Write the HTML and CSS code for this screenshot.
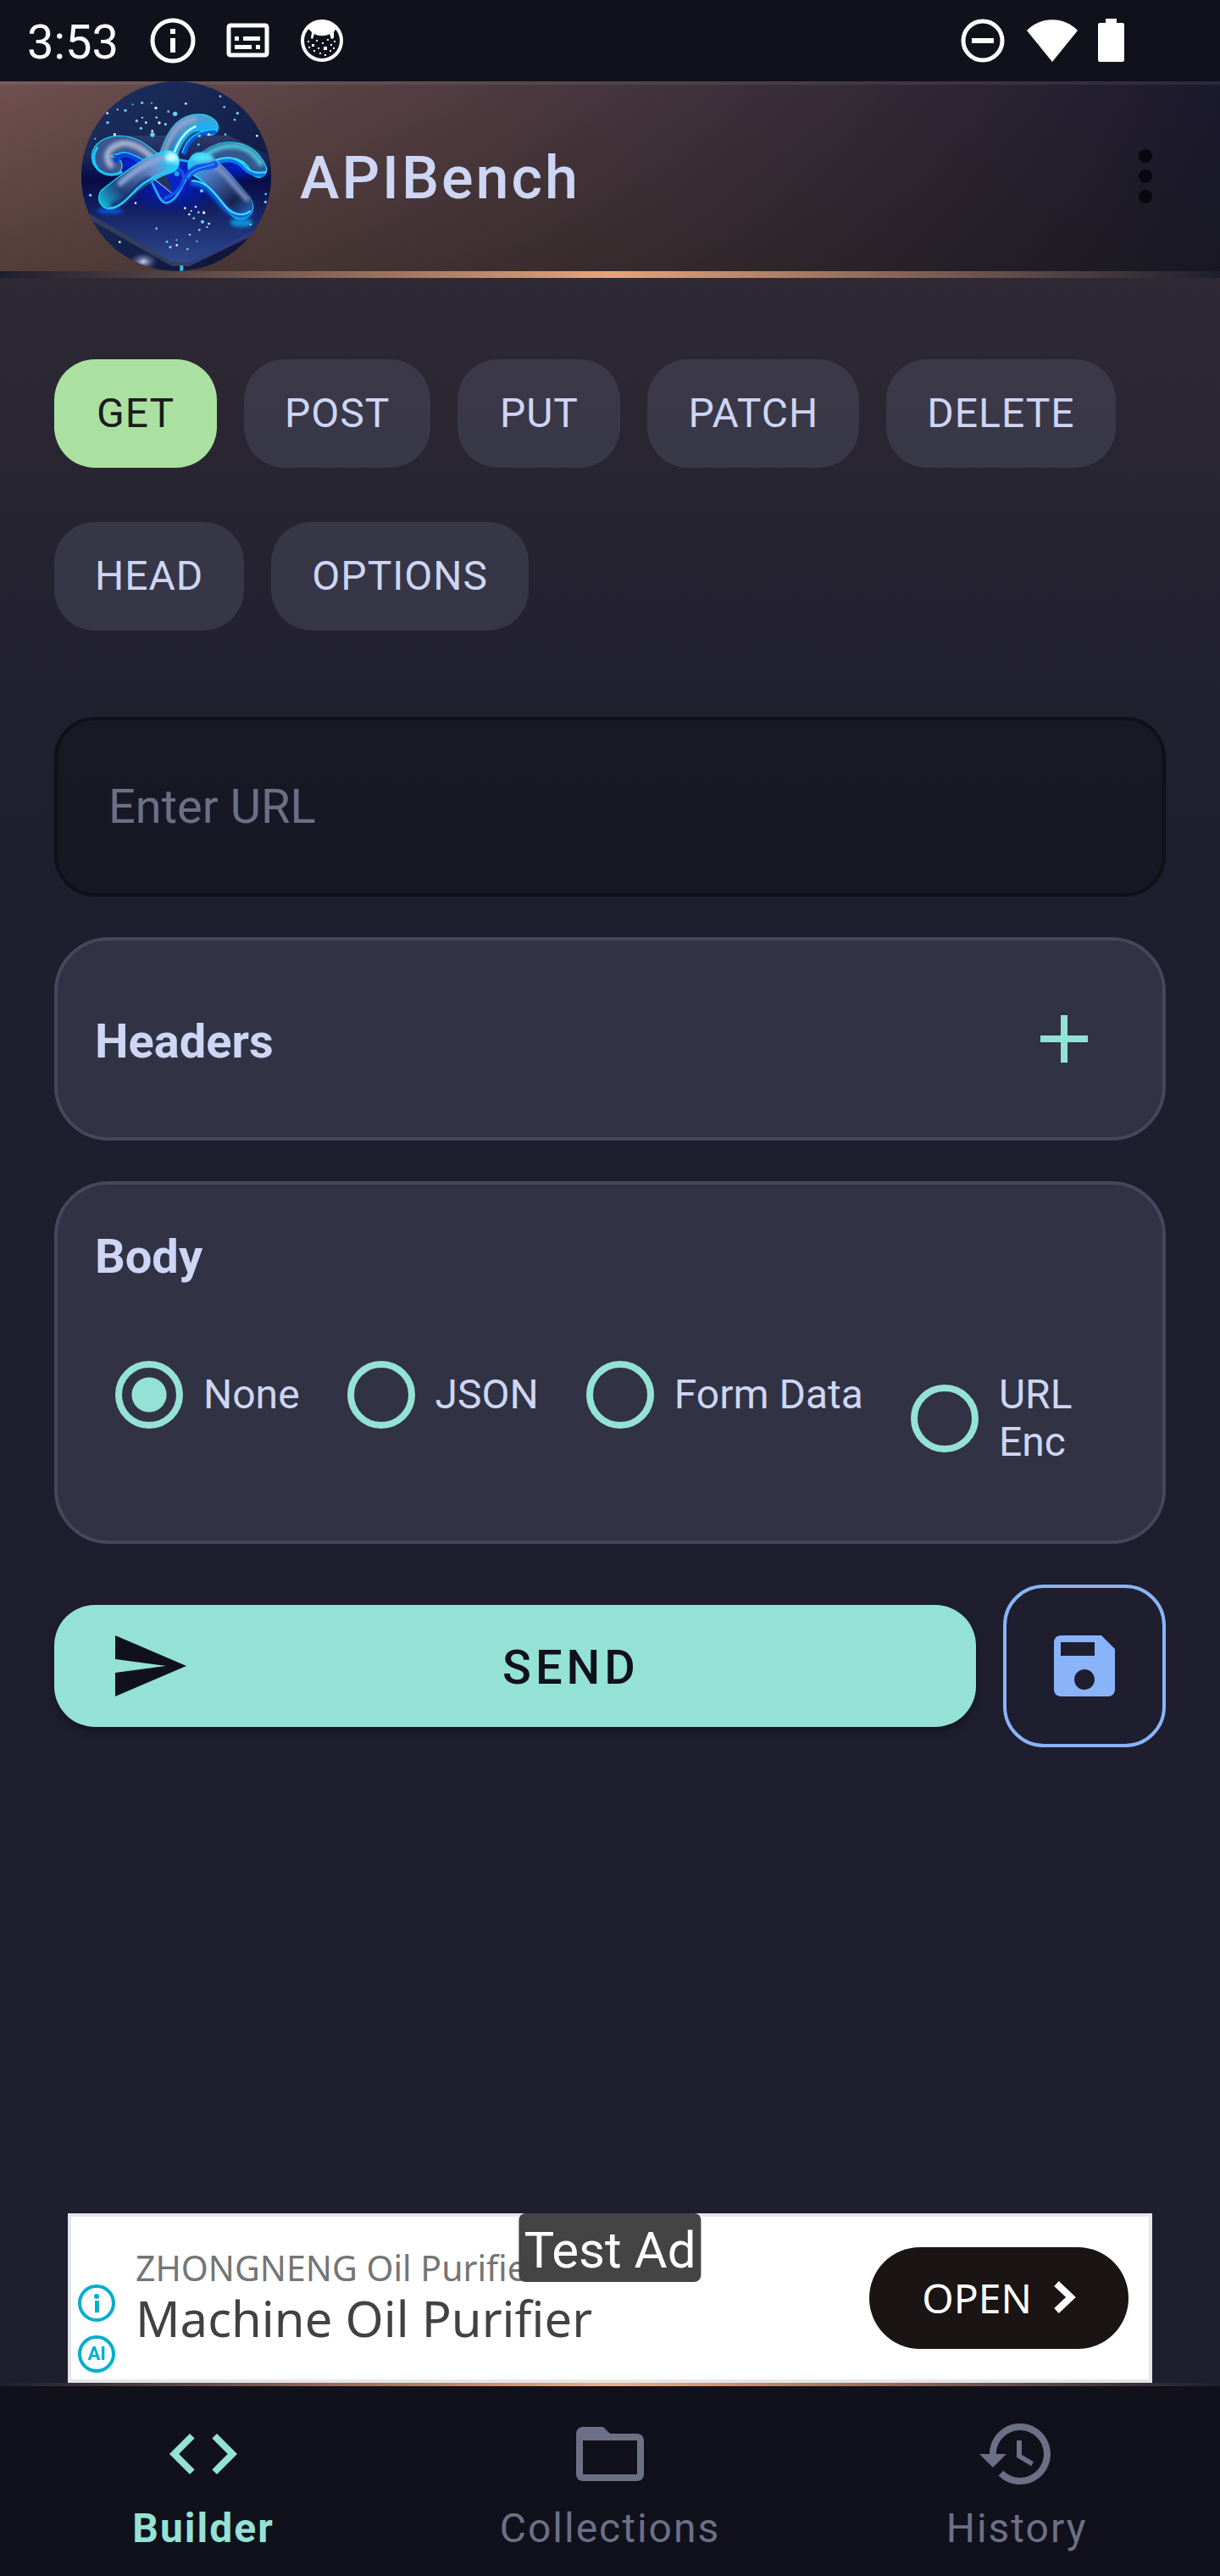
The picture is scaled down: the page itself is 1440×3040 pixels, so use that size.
FILE: index.html
```html
<!DOCTYPE html>
<html lang="en">
<head>
    <meta charset="UTF-8">
    <meta name="viewport" content="width=device-width, initial-scale=1.0">
    <title>APIBench</title>
    <link rel="stylesheet" href="styles.css">
</head>
<body>
<div class="app">
    <!-- Status bar -->
    <div class="status-bar">
        <div class="status-left">
            <span class="clock">3:53</span>
            <svg class="status-icon" viewBox="0 0 56 56">
                <circle cx="28" cy="28" r="24" fill="none" stroke="#fff" stroke-width="5"/>
                <path d="M25 14h6v6h-6zM25 25h6v17h-6z" fill="#fff"/>
            </svg>
            <svg class="status-icon" viewBox="0 0 56 56">
                <rect x="6" y="10" width="45" height="35" rx="2" fill="none" stroke="#fff" stroke-width="5"/>
                <path d="M13 23h5v5h-5zM23 23h20v5H23zM13 33h20v5H13zM38 33h5v5h-5z" fill="#fff"/>
            </svg>
            <svg class="status-icon" viewBox="0 0 56 56">
                <circle cx="28" cy="28" r="23" fill="none" stroke="#fff" stroke-width="4"/>
                <path d="M11 13C18 2 38 2 45 13L42 18L42 25L39 26L37 20C32 23 24 23 19 20L17 26L15 25L16 18Z" fill="#fff"/>
                <path d="M11 28h2v2h-2zM16 32h3v3h-3zM21 27h2v2h-2zM28 30h2v2h-2zM34 26h2v2h-2zM30 35h4v4h-4zM23 36h2v2h-2zM18 39h2v2h-2zM38 32h2v2h-2zM42 28h2v2h-2zM37 39h2v2h-2zM25 42h2v2h-2zM31 44h2v2h-2zM41 36h2v2h-2zM12 35h2v2h-2z" fill="#fff"/>
            </svg>
        </div>
        <div class="status-right">
            <svg class="status-icon" viewBox="0 0 56 56">
                <circle cx="28" cy="28" r="23" fill="none" stroke="#fff" stroke-width="5"/>
                <path d="M15 25h26v6H15z" fill="#fff"/>
            </svg>
            <svg class="status-icon wide" viewBox="0 0 64 56">
                <path d="M32 53L2 16C18-1 46-1 62 16Z" fill="#fff"/>
            </svg>
            <svg class="status-icon narrow" viewBox="0 0 32 56">
                <path d="M9 2h13v5h7q2 0 2 3v40q0 3-2 3H2q-2 0-2-3V10q0-3 2-3h7z" fill="#fff"/>
            </svg>
        </div>
    </div>

    <!-- Toolbar -->
    <header class="toolbar">
        <svg class="logo" viewBox="48 48 672 672" role="img" aria-label="APIBench logo">
            <defs>
                <linearGradient id="sky" x1="0" y1="0" x2="1" y2="1">
                    <stop offset="0" stop-color="#1b3160"/>
                    <stop offset="0.6" stop-color="#14204a"/>
                    <stop offset="1" stop-color="#0b1030"/>
                </linearGradient>
                <linearGradient id="slab" x1="0" y1="0" x2="0" y2="1">
                    <stop offset="0" stop-color="#2a3c6c"/>
                    <stop offset="0.35" stop-color="#070b45"/>
                    <stop offset="0.65" stop-color="#18276a"/>
                    <stop offset="1" stop-color="#2e4a8c"/>
                </linearGradient>
                <linearGradient id="top" gradientUnits="userSpaceOnUse" x1="340" y1="320" x2="520" y2="190">
                    <stop offset="0" stop-color="#28508f"/>
                    <stop offset="0.5" stop-color="#5a90c8"/>
                    <stop offset="1" stop-color="#35a9dc"/>
                </linearGradient>
                <linearGradient id="arm" gradientUnits="userSpaceOnUse" x1="105" y1="490" x2="390" y2="300">
                    <stop offset="0" stop-color="#0fd0e4"/>
                    <stop offset="0.15" stop-color="#1b7fae"/>
                    <stop offset="0.3" stop-color="#223f78"/>
                    <stop offset="0.7" stop-color="#6a8ccb"/>
                    <stop offset="0.88" stop-color="#26c8f5"/>
                    <stop offset="1" stop-color="#b0f8ff"/>
                </linearGradient>
                <linearGradient id="leg" gradientUnits="userSpaceOnUse" x1="450" y1="310" x2="640" y2="520">
                    <stop offset="0" stop-color="#2cc6f4"/>
                    <stop offset="0.3" stop-color="#4d78c4"/>
                    <stop offset="0.75" stop-color="#15234f"/>
                    <stop offset="1" stop-color="#2760b8"/>
                </linearGradient>
                <radialGradient id="lamp">
                    <stop offset="0" stop-color="#d0d6e4"/>
                    <stop offset="1" stop-color="#33457c" stop-opacity="0"/>
                </radialGradient>
                <radialGradient id="glow">
                    <stop offset="0" stop-color="#0020e0"/>
                    <stop offset="1" stop-color="#0015a0" stop-opacity="0"/>
                </radialGradient>
                <filter id="soft" x="-20%" y="-20%" width="140%" height="140%">
                    <feGaussianBlur stdDeviation="7"/>
                </filter>
                <clipPath id="round"><circle cx="384" cy="384" r="336"/></clipPath>
            </defs>
            <g clip-path="url(#round)">
                <rect x="48" y="48" width="672" height="672" fill="url(#sky)"/>
                <path d="M48 310L200 240H570L720 315V560L430 690H370L48 505Z" fill="url(#slab)"/>
                <path d="M48 500L370 688H430L720 548V562L432 702H368L48 520Z" fill="#353d5c"/>
                <path d="M432 694L720 550" stroke="#2835b8" stroke-width="5"/>
                <path d="M403 700v20" stroke="#39bfe8" stroke-width="12"/>
                <ellipse cx="268" cy="686" rx="52" ry="34" fill="url(#lamp)"/>
                <ellipse cx="370" cy="430" rx="220" ry="100" fill="url(#glow)"/>
                <ellipse cx="600" cy="350" rx="110" ry="65" fill="url(#glow)"/>
                <ellipse cx="220" cy="340" rx="80" ry="60" fill="url(#glow)"/>
                <ellipse cx="150" cy="506" rx="45" ry="12" fill="#0a50d0" filter="url(#soft)"/>
                <ellipse cx="615" cy="548" rx="40" ry="16" fill="#0b91cf" filter="url(#soft)"/>
                <g fill="none" stroke-linecap="round" stroke-linejoin="round">
                    <!-- top tube -->
                    <path d="M350 325C375 250 400 199 455 194C480 192 495 198 503 210" stroke="#29d5fa" stroke-width="62"/>
                    <path d="M350 325C375 250 400 199 455 194C480 192 495 198 503 210" stroke="url(#top)" stroke-width="55"/>
                    <path d="M340 305C365 235 390 190 450 182" stroke="#8fa8cc" stroke-width="18" filter="url(#soft)"/>
                    <path d="M375 303C395 250 425 222 462 212C486 205 505 208 520 216" stroke="#12b0fb" stroke-width="20" filter="url(#soft)"/>
                    <path d="M378 298C396 250 420 222 452 208" stroke="#b2f8ff" stroke-width="8"/>
                    <path d="M413 302C425 260 455 226 520 228" stroke="#0a58e6" stroke-width="14"/>
                    <path d="M405 300C420 255 450 220 528 218" stroke="#19d6ff" stroke-width="4"/>
                    <!-- left loop -->
                    <path d="M160 347C100 345 100 278 178 273C245 270 280 320 320 345" stroke="#1bd1fa" stroke-width="68"/>
                    <path d="M160 347C100 345 100 278 178 273C245 270 280 320 320 345" stroke="#3c5690" stroke-width="60"/>
                    <path d="M152 345C125 310 145 280 190 268C230 262 270 290 300 318" stroke="#a6b2cf" stroke-width="22" filter="url(#soft)"/>
                    <path d="M104 283C82 315 92 360 130 374C150 382 175 378 190 370" stroke="#16c8fb" stroke-width="9"/>
                    <path d="M172 325C195 288 235 315 262 333" stroke="#0843e0" stroke-width="20"/>
                    <path d="M172 308C205 286 240 313 268 326" stroke="#25bffc" stroke-width="5"/>
                    <!-- centre fold -->
                    <path d="M292 395C315 435 325 478 350 478C385 472 400 425 425 385L450 335L390 325Z" fill="#0924c2" stroke="#20aef8" stroke-width="8"/>
                    <path d="M296 386L348 378L372 440Z" fill="#25335f"/>
                    <path d="M296 386L366 442" stroke="#8ca2d8" stroke-width="4"/>
                    <path d="M365 360C395 350 412 365 410 395C405 425 375 450 345 462" stroke="#1252ed" stroke-width="12"/>
                    <circle cx="386" cy="375" r="9" fill="#23a2ff" stroke="none"/>
                    <!-- right arc -->
                    <path d="M470 345C520 290 570 285 610 298C650 310 665 340 676 360" stroke="#20d8f2" stroke-width="60"/>
                    <path d="M470 340C520 288 570 284 610 297C650 309 665 339 676 358" stroke="#35578f" stroke-width="51"/>
                    <path d="M490 308C540 272 595 270 635 290C660 305 672 320 684 340" stroke="#4fd0e0" stroke-width="16" filter="url(#soft)"/>
                    <path d="M520 338C565 320 600 328 622 352C640 374 668 382 692 378" stroke="#0878f0" stroke-width="14"/>
                    <path d="M520 328C565 309 603 320 626 346C645 368 665 374 698 370" stroke="#3fe0ff" stroke-width="6"/>
                    <!-- lower right leg -->
                    <path d="M470 345C525 375 560 430 612 492" stroke="#22d0f5" stroke-width="92"/>
                    <path d="M470 342C525 372 560 427 613 489" stroke="url(#leg)" stroke-width="84"/>
                    <path d="M505 335C560 370 590 420 635 465" stroke="#7f93c4" stroke-width="18" filter="url(#soft)"/>
                    <path d="M440 408C500 412 515 455 560 500C590 529 620 535 645 516" stroke="#0a6cf0" stroke-width="16" filter="url(#soft)"/>
                    <path d="M440 400C495 402 520 445 560 492C588 523 620 526 645 508" stroke="#43e7fc" stroke-width="6"/>
                    <path d="M425 385C450 345 475 355 520 343" stroke="#1450ee" stroke-width="24"/>
                    <path d="M424 388C445 352 480 356 518 340" stroke="#29b4fa" stroke-width="4"/>
                    <ellipse cx="478" cy="318" rx="36" ry="16" fill="#4fe2f6" stroke="none" filter="url(#soft)"/>
                    <!-- lower left arm -->
                    <path d="M150 460C205 420 275 355 354 333" stroke="#16d6f8" stroke-width="84"/>
                    <path d="M150 460C205 420 275 355 354 333" stroke="url(#arm)" stroke-width="76"/>
                    <path d="M185 410C230 370 280 335 335 318" stroke="#8fa5d6" stroke-width="20" filter="url(#soft)"/>
                    <path d="M165 488C205 480 235 430 285 398" stroke="#132a6b" stroke-width="22" filter="url(#soft)"/>
                    <path d="M150 497C200 495 235 425 280 402C320 377 355 364 388 348" stroke="#22c9ff" stroke-width="8"/>
                    <ellipse cx="366" cy="318" rx="22" ry="16" fill="#d0fdff" stroke="none" filter="url(#soft)"/>
                </g>
                <!-- sparks -->
                <g fill="#6ad3f4">
                    <circle cx="263" cy="124" r="5"/><circle cx="204" cy="151" r="5"/><circle cx="230" cy="130" r="3"/>
                    <circle cx="297" cy="125" r="3"/><circle cx="380" cy="163" r="8"/><circle cx="356" cy="155" r="4"/>
                    <circle cx="141" cy="194" r="5"/><circle cx="244" cy="188" r="5"/><circle cx="259" cy="214" r="5"/>
                    <circle cx="300" cy="237" r="8"/><circle cx="346" cy="200" r="5"/><circle cx="314" cy="176" r="4"/>
                    <circle cx="554" cy="139" r="4"/><circle cx="601" cy="161" r="5"/><circle cx="591" cy="184" r="4"/>
                    <circle cx="540" cy="101" r="4"/><circle cx="558" cy="236" r="4"/><circle cx="463" cy="272" r="4"/>
                    <circle cx="466" cy="241" r="5"/><circle cx="474" cy="436" r="6"/><circle cx="80" cy="451" r="5"/>
                    <circle cx="477" cy="545" r="6"/><circle cx="446" cy="533" r="4"/><circle cx="463" cy="512" r="4"/>
                    <circle cx="466" cy="574" r="4"/><circle cx="432" cy="591" r="4"/><circle cx="351" cy="616" r="4"/>
                    <circle cx="363" cy="635" r="5"/><circle cx="385" cy="610" r="3"/><circle cx="424" cy="642" r="4"/>
                    <circle cx="457" cy="614" r="3"/><circle cx="314" cy="569" r="4"/><circle cx="700" cy="475" r="5"/>
                    <circle cx="701" cy="447" r="4"/><circle cx="647" cy="555" r="4"/><circle cx="97" cy="251" r="3"/>
                </g>
                <g fill="#e6f6ff">
                    <circle cx="140" cy="161" r="4"/><circle cx="312" cy="142" r="5"/><circle cx="324" cy="195" r="5"/>
                    <circle cx="277" cy="194" r="4"/><circle cx="264" cy="176" r="3"/><circle cx="299" cy="224" r="4"/>
                    <circle cx="418" cy="127" r="4"/><circle cx="166" cy="236" r="5"/><circle cx="176" cy="148" r="3"/>
                    <circle cx="500" cy="236" r="4"/><circle cx="670" cy="241" r="4"/><circle cx="415" cy="497" r="4"/>
                    <circle cx="437" cy="507" r="3"/><circle cx="482" cy="513" r="5"/><circle cx="453" cy="492" r="4"/>
                    <circle cx="430" cy="519" r="4"/><circle cx="500" cy="552" r="4"/><circle cx="493" cy="564" r="3"/>
                    <circle cx="184" cy="617" r="4"/><circle cx="240" cy="479" r="4"/><circle cx="386" cy="628" r="4"/>
                </g>
            </g>
        </svg>
        <h1 class="title">APIBench</h1>
        <button class="menu-button" aria-label="More options">
            <svg class="icon" viewBox="0 0 24 24" fill="#09080e">
                <circle cx="12" cy="6" r="2"/><circle cx="12" cy="12" r="2"/><circle cx="12" cy="18" r="2"/>
            </svg>
        </button>
    </header>
    <div class="glow-line"></div>

    <!-- Request builder -->
    <main class="builder">
        <div class="methods">
            <button class="chip selected">GET</button>
            <button class="chip">POST</button>
            <button class="chip">PUT</button>
            <button class="chip">PATCH</button>
            <button class="chip">DELETE</button>
            <button class="chip">HEAD</button>
            <button class="chip">OPTIONS</button>
        </div>

        <input class="url-input" type="text" placeholder="Enter URL" aria-label="Enter URL">

        <section class="card headers-card">
            <h2 class="card-title">Headers</h2>
            <button class="add-button" aria-label="Add header">
                <svg class="icon" viewBox="0 0 24 24"><path d="M19 13h-6v6h-2v-6H5v-2h6V5h2v6h6v2z" fill="#94e2d5"/></svg>
            </button>
        </section>

        <section class="card">
            <h2 class="card-title">Body</h2>
            <div class="body-types">
                <label class="option"><input type="radio" name="body" checked><span>None</span></label>
                <label class="option"><input type="radio" name="body"><span>JSON</span></label>
                <label class="option"><input type="radio" name="body"><span>Form Data</span></label>
                <label class="option last"><input type="radio" name="body"><span>URL Enc</span></label>
            </div>
        </section>

        <div class="actions">
            <button class="send-button">
                <svg class="icon" viewBox="0 0 24 24"><path d="M2.01 21L23 12 2.01 3 2 10l15 2-15 2z" fill="#11111b"/></svg>
                <span>SEND</span>
            </button>
            <button class="save-button" aria-label="Save request">
                <svg class="icon" viewBox="0 0 24 24"><path d="M17 3H5c-1.11 0-2 .9-2 2v14c0 1.1.89 2 2 2h14c1.1 0 2-.9 2-2V7l-4-4zm-5 16c-1.66 0-3-1.34-3-3s1.34-3 3-3 3 1.34 3 3-1.34 3-3 3zm3-10H5V5h10v4z" fill="#89b4fa"/></svg>
            </button>
        </div>
    </main>

    <!-- Ad banner -->
    <aside class="ad">
        <div class="ad-marks">
            <svg class="ad-mark" viewBox="0 0 44 44">
                <circle cx="22" cy="22" r="20" fill="none" stroke="#00aecd" stroke-width="4"/>
                <circle cx="22" cy="14" r="3" fill="#00aecd"/>
                <path d="M20 19h5v14h-5z" fill="#00aecd"/>
            </svg>
            <span class="ad-mark ad-ai">AI</span>
        </div>
        <div class="ad-text">
            <div class="ad-brand">ZHONGNENG Oil Purifier</div>
            <div class="ad-headline">Machine Oil Purifier</div>
        </div>
        <button class="ad-open">
            OPEN
            <svg class="chevron" viewBox="0 0 26 38"><path d="M3 3L20 19L3 35" fill="none" stroke="#fff" stroke-width="8"/></svg>
        </button>
        <div class="ad-badge">Test Ad</div>
    </aside>

    <!-- Bottom navigation -->
    <nav class="bottom-nav">
        <a class="nav-item active" href="#builder">
            <svg class="icon" viewBox="0 0 24 24"><path d="M9.4 16.6L4.8 12l4.6-4.6L8 6l-6 6 6 6 1.4-1.4zm5.2 0l4.6-4.6-4.6-4.6L16 6l6 6-6 6-1.4-1.4z"/></svg>
            Builder
        </a>
        <a class="nav-item" href="#collections">
            <svg class="icon" viewBox="0 0 24 24"><path d="M20 6h-8l-2-2H4c-1.1 0-1.99.9-1.99 2L2 18c0 1.1.9 2 2 2h16c1.1 0 2-.9 2-2V8c0-1.1-.9-2-2-2zm0 12H4V8h16v10z"/></svg>
            Collections
        </a>
        <a class="nav-item" href="#history">
            <svg class="icon" viewBox="0 0 24 24"><path d="M13 3c-4.97 0-9 4.03-9 9H1l3.89 3.89.07.14L9 12H6c0-3.87 3.13-7 7-7s7 3.13 7 7-3.13 7-7 7c-1.93 0-3.68-.79-4.94-2.06l-1.42 1.42C8.27 19.99 10.51 21 13 21c4.97 0 9-4.03 9-9s-4.03-9-9-9zm-1 5v5l4.28 2.54.72-1.21-3.5-2.08V8H12z"/></svg>
            History
        </a>
    </nav>
</div>
</body>
</html>
```
FILE: styles.css
```css
* {
    box-sizing: border-box;
}

body {
    margin: 0;
    background-color: #1e1e2e;
    color: #cdd6f4;
    font-family: Roboto, sans-serif;
}

button {
    border: none;
    padding: 0;
    background: none;
    color: inherit;
    font-family: inherit;
    cursor: pointer;
}

.app {
    display: flex;
    flex-direction: column;
    min-height: 100vh;
}

.icon {
    display: block;
    width: 96px;
    height: 96px;
    flex: none;
}

/* Status bar */
.status-bar {
    display: flex;
    justify-content: space-between;
    align-items: center;
    height: 96px;
    padding: 0 112px 0 32px;
    background-color: #11111b;
    color: white;
}

.status-left,
.status-right {
    display: flex;
    align-items: center;
}

.status-left {
    gap: 32px;
}

.status-right {
    gap: 22px;
}

.clock {
    font-size: 56px;
    line-height: 64px;
    padding: 4px 4px 0 0;
}

.status-icon {
    width: 56px;
    height: 56px;
}

.status-icon.wide {
    width: 64px;
}

.status-icon.narrow {
    width: 32px;
}

/* Toolbar */
.toolbar {
    display: flex;
    align-items: center;
    padding: 0 40px 0 96px;
    background: linear-gradient(to bottom, rgba(255, 255, 255, 0.07) 4px, transparent 4px),
        linear-gradient(to bottom, transparent, rgba(16, 18, 8, 0.3)),
        linear-gradient(to right, #70504f, #46353d 50%, #1b192d);
}

.logo {
    width: 224px;
    height: 224px;
    flex: none;
}

.title {
    flex: 1;
    margin: 0 0 0 34px;
    padding-top: 4px;
    font-size: 70px;
    line-height: 80px;
    font-weight: 500;
    letter-spacing: 3px;
}

.glow-line {
    height: 8px;
    background: linear-gradient(to right, #1e1e2e, #e6a47d 50%, #1e1e2e);
}

/* Builder */
.builder {
    flex: 1;
    display: flex;
    flex-direction: column;
    gap: 48px;
    padding: 96px 64px 48px;
    background: linear-gradient(to bottom, #2e2934, #1e1e2e 640px);
}

.methods {
    display: flex;
    flex-wrap: wrap;
    gap: 64px 32px;
    margin-bottom: 54px;
}

.chip {
    min-width: 192px;
    height: 128px;
    padding: 0 48px 2px;
    border-radius: 48px;
    background-color: rgba(88, 91, 112, 0.35);
    color: #cdd6f4;
    font-size: 48px;
    letter-spacing: 1px;
}

.chip.selected {
    background-color: #abe1a0;
    color: #1c1b20;
}

.url-input {
    width: 100%;
    height: 212px;
    padding: 0 60px;
    border: 4px solid #101016;
    border-radius: 48px;
    background-color: rgba(17, 17, 27, 0.5);
    color: #cdd6f4;
    font-family: inherit;
    font-size: 56px;
    outline: none;
}

.url-input::placeholder {
    color: #6c7086;
}

.card {
    padding: 44px;
    border: 4px solid #45475a;
    border-radius: 64px;
    background-color: #313244;
}

.headers-card {
    display: flex;
    justify-content: space-between;
    align-items: center;
}

.card-title {
    margin: 0;
    padding-top: 6px;
    font-size: 56px;
    line-height: 70px;
    font-weight: 700;
}

.add-button {
    padding: 24px;
}

/* Body type radios */
.body-types {
    display: flex;
    align-items: flex-start;
    gap: 32px;
    margin-top: 56px;
}

.option {
    display: flex;
    flex: none;
    align-items: center;
    gap: 24px;
    padding-left: 24px;
    font-size: 48px;
    line-height: 56px;
}

.option.last {
    flex: 1;
}

.option span {
    padding: 44px 0;
}

.option input {
    appearance: none;
    flex: none;
    width: 80px;
    height: 80px;
    margin: 0;
    border: 8px solid #94e2d5;
    border-radius: 50%;
}

.option input:checked {
    background: radial-gradient(circle, #94e2d5 20px, transparent 21px);
}

/* Send and save */
.actions {
    display: flex;
    align-items: center;
    gap: 32px;
}

.send-button {
    flex: 1;
    display: flex;
    align-items: center;
    height: 144px;
    padding: 0 28px 0 64px;
    border-radius: 48px;
    background-color: #94e2d5;
    box-shadow: 0 6px 8px rgba(0, 0, 0, 0.3);
    color: #11111b;
    font-size: 56px;
    font-weight: 500;
    letter-spacing: 5px;
}

.send-button span {
    flex: 1;
    padding-top: 4px;
}

.save-button {
    padding: 44px;
    border: 4px solid #89b4fa;
    border-radius: 48px;
}

/* Ad banner */
.ad {
    position: relative;
    display: flex;
    align-items: center;
    height: 200px;
    margin: 0 80px;
    padding: 0 24px 0 8px;
    border: 4px solid #e5e6e8;
    background-color: white;
    font-family: "Noto Sans", sans-serif;
}

.ad-marks {
    align-self: flex-end;
    display: flex;
    flex-direction: column;
    gap: 16px;
    margin-bottom: 8px;
}

.ad-mark {
    width: 44px;
    height: 44px;
}

.ad-ai {
    border: 4px solid #00aecd;
    border-radius: 50%;
    color: #00aecd;
    font-family: Roboto, sans-serif;
    font-size: 22px;
    font-weight: 700;
    line-height: 36px;
    text-align: center;
}

.ad-text {
    flex: 1;
    margin-left: 24px;
}

.ad-brand {
    color: #757575;
    font-size: 41px;
    line-height: 48px;
}

.ad-headline {
    color: #424242;
    font-size: 58px;
    line-height: 72px;
}

.ad-open {
    display: flex;
    align-items: center;
    justify-content: center;
    gap: 26px;
    height: 120px;
    padding: 0 62px 2px;
    border-radius: 60px;
    background-color: #1a1414;
    color: white;
    font-size: 48px;
}

.chevron {
    width: 26px;
    height: 38px;
}

.ad-badge {
    position: absolute;
    top: -4px;
    left: 50%;
    transform: translateX(-50%);
    padding: 8px 6px 2px;
    border-radius: 8px;
    background-color: #444;
    color: white;
    font-family: Roboto, sans-serif;
    font-size: 60px;
    line-height: 71px;
    white-space: nowrap;
}

/* Bottom navigation */
.bottom-nav {
    display: flex;
    height: 228px;
    padding-top: 36px;
    background: linear-gradient(to right, #1e1e2e, #f5ab82 50%, #1e1e2e) top / 100% 4px no-repeat #11111b;
}

.nav-item {
    flex: 1;
    display: flex;
    flex-direction: column;
    align-items: center;
    gap: 12px;
    color: #6c7086;
    fill: currentColor;
    font-size: 48px;
    line-height: 56px;
    letter-spacing: 2px;
    text-decoration: none;
}

.nav-item.active {
    color: #94e2d5;
    font-weight: 700;
}
```
